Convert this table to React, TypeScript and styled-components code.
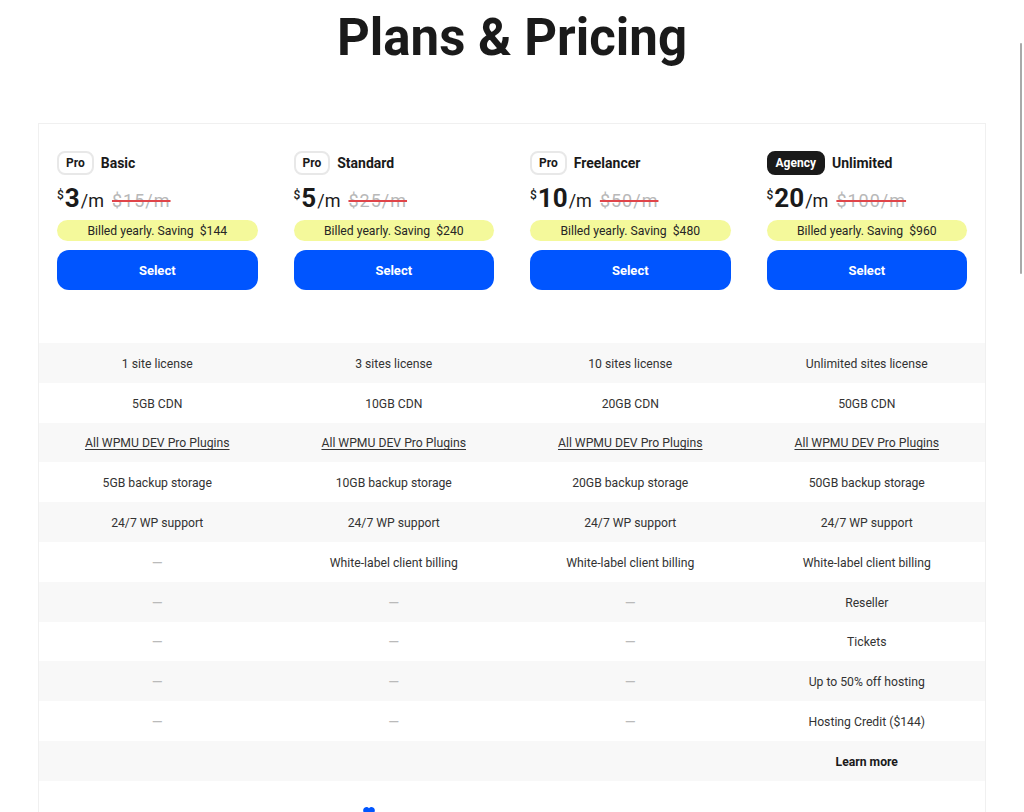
import React from "react";
import styled, { createGlobalStyle } from "styled-components";

const Global = createGlobalStyle`
  html, body { margin: 0; padding: 0; background: #fff; overflow: hidden; }
  body { font-family: Roboto, "Liberation Sans", Arial, sans-serif; color: #1a1a1a; }
  * { box-sizing: border-box; }
`;

const Page = styled.div`
  padding-top: 8px;
  min-height: 812px;
`;

const Title = styled.h1`
  margin: 0;
  font-size: 51px;
  line-height: 60px;
  font-weight: 700;
  text-align: center;
  color: #1a1a1a;
`;

const Card = styled.section`
  margin: 55px 38px 0;
  border: 1px solid #f0f0f0;
  border-bottom: none;
  background: #fff;
`;

const Grid = styled.div`
  display: grid;
  grid-template-columns: repeat(4, 1fr);
  column-gap: 36px;
  padding: 0 18px;
`;

const Head = styled(Grid)`
  padding-top: 27px;
  padding-bottom: 53px;
`;

const Plan = styled.div`
  display: flex;
  flex-direction: column;
`;

const NameRow = styled.div`
  display: flex;
  align-items: center;
  gap: 7px;
  height: 24px;
`;

const Badge = styled.span<{ $dark?: boolean }>`
  display: inline-flex;
  align-items: center;
  height: 24px;
  padding: 0 7px;
  border-radius: 8px;
  border: 2px solid ${(p) => (p.$dark ? "#1a1a1a" : "#e8e8e8")};
  background: ${(p) => (p.$dark ? "#1a1a1a" : "#fff")};
  color: ${(p) => (p.$dark ? "#fff" : "#1a1a1a")};
  font-size: 12px;
  font-weight: 700;
`;

const PlanName = styled.span`
  font-size: 14px;
  font-weight: 700;
  color: #1a1a1a;
`;

const PriceRow = styled.div`
  display: flex;
  align-items: baseline;
  margin-top: 7px;
  height: 32px;
  line-height: 32px;
`;

const Currency = styled.span`
  align-self: flex-start;
  font-size: 12px;
  line-height: 20px;
  font-weight: 500;
  margin-top: 3px;
  margin-right: 1px;
`;

const Amount = styled.span`
  font-size: 26px;
  font-weight: 700;
  margin-right: 1px;
`;

const Per = styled.span`
  font-size: 18px;
  font-weight: 400;
  color: #1a1a1a;
`;

const OldPrice = styled.span`
  margin-left: 8px;
  font-size: 18px;
  letter-spacing: 1px;
  color: #b8b8b8;
  text-decoration: line-through;
  text-decoration-color: #e0454a;
  text-decoration-thickness: 1.5px;
`;

const Saving = styled.div`
  margin-top: 6px;
  height: 21px;
  border-radius: 11px;
  background: #f4f99b;
  display: flex;
  align-items: center;
  justify-content: center;
  font-size: 12.2px;
  color: #262626;
  white-space: pre;
`;

const SelectButton = styled.button`
  margin-top: 9px;
  height: 40px;
  border: none;
  border-radius: 12px;
  background: #0055ff;
  color: #fff;
  font-family: inherit;
  font-size: 13px;
  font-weight: 700;
  cursor: pointer;
`;

const Row = styled(Grid)<{ $alt: boolean }>`
  height: 39.8px;
  padding-top: 2px;
  align-items: center;
  background: ${(p) => (p.$alt ? "#f8f8f8" : "#fff")};
`;

const Cell = styled.div<{ $kind: "text" | "dash" | "link" | "bold" | "empty" }>`
  text-align: center;
  font-size: ${(p) => (p.$kind === "dash" ? "14px" : "12.2px")};
  color: ${(p) => (p.$kind === "dash" ? "#bababa" : p.$kind === "bold" ? "#1a1a1a" : "#333")};
  font-weight: ${(p) => (p.$kind === "bold" ? 700 : 400)};
  text-decoration: ${(p) => (p.$kind === "link" ? "underline" : "none")};
  text-underline-offset: 2px;
`;

const Footer = styled.div`
  padding: 26px 0 40px 324px;
  display: flex;
`;

const Heart = styled.svg`
  width: 12px;
  height: 11px;
  display: block;
`;

const ScrollThumb = styled.div`
  position: fixed;
  left: 1020px;
  top: 43px;
  width: 2px;
  height: 231px;
  background: #a9a9a9;
  border-radius: 1px;
`;

type PlanData = {
  tier: string;
  dark?: boolean;
  name: string;
  price: string;
  old: string;
  saving: string;
};

const plans: PlanData[] = [
  { tier: "Pro", name: "Basic", price: "3", old: "$15/m", saving: "$144" },
  { tier: "Pro", name: "Standard", price: "5", old: "$25/m", saving: "$240" },
  { tier: "Pro", name: "Freelancer", price: "10", old: "$50/m", saving: "$480" },
  { tier: "Agency", dark: true, name: "Unlimited", price: "20", old: "$100/m", saving: "$960" },
];

type C = { t: string; k: "text" | "dash" | "link" | "bold" | "empty" };
const d: C = { t: "—", k: "dash" };
const tx = (t: string): C => ({ t, k: "text" });
const link: C = { t: "All WPMU DEV Pro Plugins", k: "link" };

const rows: C[][] = [
  [tx("1 site license"), tx("3 sites license"), tx("10 sites license"), tx("Unlimited sites license")],
  [tx("5GB CDN"), tx("10GB CDN"), tx("20GB CDN"), tx("50GB CDN")],
  [link, link, link, link],
  [tx("5GB backup storage"), tx("10GB backup storage"), tx("20GB backup storage"), tx("50GB backup storage")],
  [tx("24/7 WP support"), tx("24/7 WP support"), tx("24/7 WP support"), tx("24/7 WP support")],
  [d, tx("White-label client billing"), tx("White-label client billing"), tx("White-label client billing")],
  [d, d, d, tx("Reseller")],
  [d, d, d, tx("Tickets")],
  [d, d, d, tx("Up to 50% off hosting")],
  [d, d, d, tx("Hosting Credit ($144)")],
  [
    { t: "", k: "empty" },
    { t: "", k: "empty" },
    { t: "", k: "empty" },
    { t: "Learn more", k: "bold" },
  ],
];

export default function App() {
  return (
    <>
      <Global />
      <Page>
        <Title>Plans &amp; Pricing</Title>
        <Card>
          <Head>
            {plans.map((p) => (
              <Plan key={p.name}>
                <NameRow>
                  <Badge $dark={p.dark}>{p.tier}</Badge>
                  <PlanName>{p.name}</PlanName>
                </NameRow>
                <PriceRow>
                  <Currency>$</Currency>
                  <Amount>{p.price}</Amount>
                  <Per>/m</Per>
                  <OldPrice>{p.old}</OldPrice>
                </PriceRow>
                <Saving>{`Billed yearly. Saving  ${p.saving}`}</Saving>
                <SelectButton>Select</SelectButton>
              </Plan>
            ))}
          </Head>
          {rows.map((r, i) => (
            <Row key={i} $alt={i % 2 === 0}>
              {r.map((c, j) => (
                <Cell key={j} $kind={c.k}>
                  {c.t}
                </Cell>
              ))}
            </Row>
          ))}
          <Footer>
            <Heart viewBox="0 0 24 22">
              <path
                d="M12 21.5 2.6 12.3C-.6 9.2-.4 4.2 3 1.6 5.9-.6 9.9-.1 12 2.6 14.1-.1 18.1-.6 21 1.6c3.4 2.6 3.6 7.6.4 10.7Z"
                fill="#0055ff"
              />
            </Heart>
          </Footer>
        </Card>
        <ScrollThumb />
      </Page>
    </>
  );
}
